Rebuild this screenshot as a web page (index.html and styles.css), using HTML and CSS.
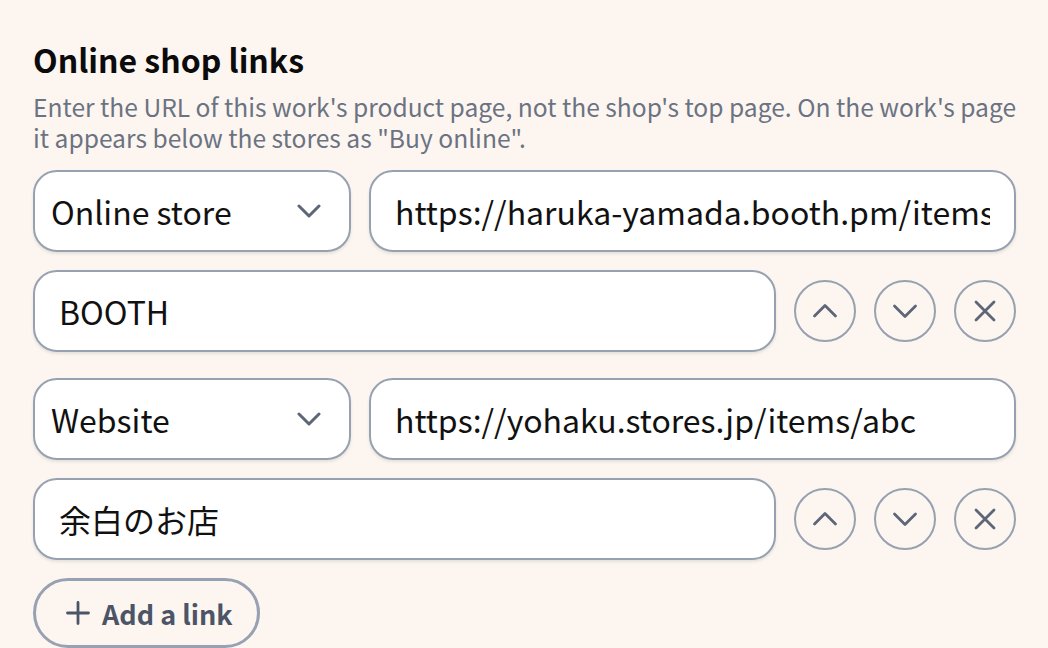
FILE: index.html
```html
<!DOCTYPE html>
<html lang="en">
<head>
<meta charset="utf-8">
<link rel="stylesheet" href="styles.css">
</head>
<body>
<section class="panel">
  <h2 class="title">Online shop links</h2>
  <p class="hint">Enter the URL of this work's product page, not the shop's top page. On the work's page it appears below the stores as "Buy online".</p>

  <div class="links">
    <div class="link">
      <div class="row">
        <div class="select field">
          <span class="value">Online store</span>
          <svg class="chev" viewBox="0 0 24 14" width="24" height="14"><path d="M2 2 L12 12 L22 2" fill="none" stroke="currentColor" stroke-width="3" stroke-linecap="round" stroke-linejoin="round"/></svg>
        </div>
        <div class="url field"><span class="value clip">https://haruka-yamada.booth.pm/items/4821937</span></div>
      </div>
      <div class="row">
        <div class="name field"><span class="value">BOOTH</span></div>
        <button class="circle" aria-label="Move up"><svg viewBox="0 0 26 26" width="26" height="26"><path d="M2.5 18 L13 7.5 L23.5 18" fill="none" stroke="currentColor" stroke-width="2.8" stroke-linecap="round" stroke-linejoin="round"/></svg></button>
        <button class="circle" aria-label="Move down"><svg viewBox="0 0 26 26" width="26" height="26"><path d="M2.5 8 L13 18.5 L23.5 8" fill="none" stroke="currentColor" stroke-width="2.8" stroke-linecap="round" stroke-linejoin="round"/></svg></button>
        <button class="circle" aria-label="Remove"><svg viewBox="0 0 26 26" width="26" height="26"><path d="M4 4 L22 22 M22 4 L4 22" fill="none" stroke="currentColor" stroke-width="2.8" stroke-linecap="round"/></svg></button>
      </div>
    </div>

    <div class="link">
      <div class="row">
        <div class="select field">
          <span class="value">Website</span>
          <svg class="chev" viewBox="0 0 24 14" width="24" height="14"><path d="M2 2 L12 12 L22 2" fill="none" stroke="currentColor" stroke-width="3" stroke-linecap="round" stroke-linejoin="round"/></svg>
        </div>
        <div class="url field"><span class="value">https://yohaku.stores.jp/items/abc</span></div>
      </div>
      <div class="row">
        <div class="name field"><span class="value">余白のお店</span></div>
        <button class="circle" aria-label="Move up"><svg viewBox="0 0 26 26" width="26" height="26"><path d="M2.5 18 L13 7.5 L23.5 18" fill="none" stroke="currentColor" stroke-width="2.8" stroke-linecap="round" stroke-linejoin="round"/></svg></button>
        <button class="circle" aria-label="Move down"><svg viewBox="0 0 26 26" width="26" height="26"><path d="M2.5 8 L13 18.5 L23.5 8" fill="none" stroke="currentColor" stroke-width="2.8" stroke-linecap="round" stroke-linejoin="round"/></svg></button>
        <button class="circle" aria-label="Remove"><svg viewBox="0 0 26 26" width="26" height="26"><path d="M4 4 L22 22 M22 4 L4 22" fill="none" stroke="currentColor" stroke-width="2.8" stroke-linecap="round"/></svg></button>
      </div>
    </div>
  </div>

  <button class="add"><svg viewBox="0 0 24 24" width="24" height="24"><path d="M12 1.5 V22.5 M1.5 12 H22.5" fill="none" stroke="currentColor" stroke-width="2.8" stroke-linecap="round"/></svg><span>Add a link</span></button>
</section>
</body>
</html>
```

FILE: styles.css
```css
* { box-sizing: border-box; }

html, body {
  margin: 0;
  padding: 0;
  background: #fdf6f0;
}

body {
  font-family: "Noto Sans CJK JP", "Noto Sans", sans-serif;
  color: #111;
  overflow: hidden;
}

.panel {
  width: 1048px;
  padding: 37px 30px 0 33px;
}

.title {
  margin: 0;
  font-size: 32px;
  font-weight: 700;
  line-height: 44px;
  color: #0b0b0b;
}

.hint {
  margin: 10px 0 0;
  font-size: 24.6px;
  line-height: 31px;
  color: #6b7383;
}

.links {
  margin-top: 17px;
  display: flex;
  flex-direction: column;
  gap: 26px;
}

.link {
  display: flex;
  flex-direction: column;
  gap: 18px;
}

.row {
  display: flex;
  align-items: center;
  gap: 18px;
  padding-right: 2px;
}

.field {
  height: 82px;
  background: #fff;
  border: 2px solid #97a1b1;
  border-radius: 24px;
  box-shadow: 0 2px 3px rgba(60, 70, 90, 0.12);
  display: flex;
  align-items: center;
  font-size: 32px;
  color: #111;
  overflow: hidden;
}

.value {
  white-space: nowrap;
}

.select {
  width: 318px;
  flex: none;
  padding: 0 28px 0 16px;
  justify-content: space-between;
}

.chev { color: #5d6677; flex: none; }

.url {
  flex: 1;
  padding: 0 24px;
}

.clip {
  overflow: hidden;
  display: block;
}

.name {
  flex: 1;
  padding: 0 24px;
}

.circle {
  width: 62px;
  height: 62px;
  flex: none;
  border-radius: 50%;
  border: 2px solid #97a1b1;
  background: transparent;
  color: #5d6677;
  padding: 0;
  display: flex;
  align-items: center;
  justify-content: center;
}

.add {
  margin-top: 18px;
  height: 70px;
  padding: 0 24px 0 30px;
  border: 3px solid #97a1b1;
  border-radius: 35px;
  background: transparent;
  display: flex;
  align-items: center;
  gap: 12px;
  color: #4b5567;
  font-family: "Noto Sans CJK JP", "Noto Sans", sans-serif;
  font-size: 27px;
  font-weight: 700;
}

.add svg { color: #4b5567; }
```
